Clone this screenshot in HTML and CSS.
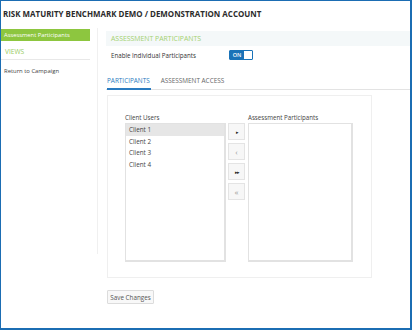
FILE: index.html
```html
<!DOCTYPE html>
<html>
<head>
<meta charset="utf-8">
<link rel="stylesheet" href="styles.css">
</head>
<body>
<div class="frame">
  <div class="title">RISK MATURITY BENCHMARK DEMO / DEMONSTRATION ACCOUNT</div>
  <div class="main">
    <aside class="sidebar">
      <div class="nav-active">Assessment Participants</div>
      <div class="nav-head">VIEWS</div>
      <div class="nav-link">Return to Campaign</div>
    </aside>
    <div class="divider"></div>
    <section class="content">
      <div class="section-head">ASSESSMENT PARTICIPANTS</div>
      <div class="enable-row">
        <span class="enable-label">Enable Individual Participants</span>
        <span class="toggle"><span class="toggle-on">ON</span><span class="toggle-knob"></span></span>
      </div>
      <div class="tabs">
        <span class="tab active">PARTICIPANTS</span>
        <span class="tab">ASSESSMENT ACCESS</span>
      </div>
      <div class="panel">
        <div class="picker">
          <div class="col">
            <div class="col-label">Client Users</div>
            <div class="listbox">
              <div class="item selected">Client 1</div>
              <div class="item">Client 2</div>
              <div class="item">Client 3</div>
              <div class="item">Client 4</div>
            </div>
          </div>
          <div class="buttons">
            <span class="mv dark">&#9656;</span>
            <span class="mv">&lsaquo;</span>
            <span class="mv dark">&#9656;&#9656;</span>
            <span class="mv">&laquo;</span>
          </div>
          <div class="col right">
            <div class="col-label">Assessment Participants</div>
            <div class="listbox"></div>
          </div>
        </div>
      </div>
      <button class="save">Save Changes</button>
    </section>
  </div>
</div>
</body>
</html>
```
FILE: styles.css
```css
html, body {
  margin: 0;
  padding: 0;
  background: #fff;
}
.frame {
  width: 412px;
  height: 330px;
  box-sizing: border-box;
  border-style: solid;
  border-color: #1b6db3;
  border-width: 1px 2px 2px 1px;
  font-family: "Open Sans", "Liberation Sans", sans-serif;
  color: #333;
  overflow: hidden;
}
.title {
  height: 27px;
  line-height: 26px;
  padding-left: 2px;
  font-size: 7.95px;
  font-weight: 700;
  color: #2b2b2b;
}
.main {
  display: flex;
  height: 300px;
}
.sidebar {
  width: 89px;
  flex: none;
}
.nav-active {
  background: #8dc63f;
  color: #fff;
  font-size: 5.8px;
  height: 12px;
  line-height: 12px;
  padding-left: 3px;
  margin-top: 1px;
}
.nav-head {
  color: #98cb60;
  font-size: 6.6px;
  height: 18px;
  line-height: 22px;
  padding-left: 4px;
  border-bottom: 1px solid #e8e8e8;
}
.nav-link {
  font-size: 5.9px;
  color: #444;
  padding-left: 3px;
  margin-top: 7px;
}
.divider {
  width: 1px;
  height: 226px;
  background: #f0f0f0;
  margin: 0 8px 0 7px;
  flex: none;
}
.content {
  flex: 1;
  display: flex;
  flex-direction: column;
  align-items: flex-start;
}
.section-head {
  align-self: stretch;
  background: #f4f8f9;
  color: #a3d170;
  font-size: 6.9px;
  height: 15px;
  line-height: 15px;
  padding-left: 5px;
  margin-top: 3px;
}
.enable-row {
  display: flex;
  align-items: center;
  margin-top: 4px;
  padding-left: 5px;
  height: 10px;
}
.enable-label {
  font-size: 6.2px;
  color: #333;
  width: 118px;
}
.toggle {
  display: flex;
  height: 10px;
  width: 24px;
  border: 1px solid #1a73b8;
  box-sizing: border-box;
  border-radius: 1px;
  overflow: hidden;
}
.toggle-on {
  background: #1a73b8;
  color: #fff;
  font-size: 5.5px;
  font-weight: 600;
  width: 14px;
  line-height: 8px;
  text-align: center;
}
.toggle-knob {
  flex: 1;
  background: #fff;
}
.tabs {
  align-self: stretch;
  display: flex;
  margin-top: 16px;
  border-bottom: 1px solid #e3e3e3;
  padding-left: 1px;
}
.tab {
  font-size: 6.4px;
  color: #666;
  height: 12px;
  line-height: 10px;
  padding-right: 10px;
}
.tab.active {
  color: #2a7bc0;
  border-bottom: 2px solid #2a7bc0;
  margin-bottom: -1px;
  padding-right: 1px;
  margin-right: 10px;
}
.panel {
  margin-top: 5px;
  margin-left: 1px;
  width: 265px;
  height: 183px;
  box-sizing: border-box;
  border: 1px solid #efefef;
  padding: 19px 0 0 17px;
}
.picker {
  display: flex;
  align-items: flex-start;
}
.col-label {
  font-size: 6.2px;
  color: #444;
  height: 8px;
  line-height: 6px;
}
.listbox {
  width: 101px;
  height: 139px;
  box-sizing: border-box;
  border: 1px solid #e2e2e2;
  border-width: 1px 2px 2px 1px;
}
.right .listbox {
  width: 105px;
}
.item {
  font-size: 6.3px;
  color: #444;
  height: 11.5px;
  line-height: 11.5px;
  padding-left: 3px;
}
.item.selected {
  background: #e6e6e6;
}
.buttons {
  display: flex;
  flex-direction: column;
  gap: 3px;
  margin: 8px 3px 0 2px;
}
.mv {
  width: 17px;
  height: 17px;
  box-sizing: border-box;
  border: 1px solid #e4e4e4;
  background: #f7f7f7;
  font-size: 5px;
  color: #222;
  display: flex;
  align-items: center;
  justify-content: center;
  letter-spacing: -1px;
}
.mv:not(.dark) {
  font-size: 8px;
  color: #9a9a9a;
  letter-spacing: 0;
}
.save {
  margin-top: 12px;
  margin-left: 1px;
  font-family: "Open Sans", "Liberation Sans", sans-serif;
  font-size: 6.3px;
  color: #555;
  background: #f8f8f8;
  border: 1px solid #dcdcdc;
  height: 14px;
  width: 47px;
  padding: 0;
  border-radius: 1px;
}
```
